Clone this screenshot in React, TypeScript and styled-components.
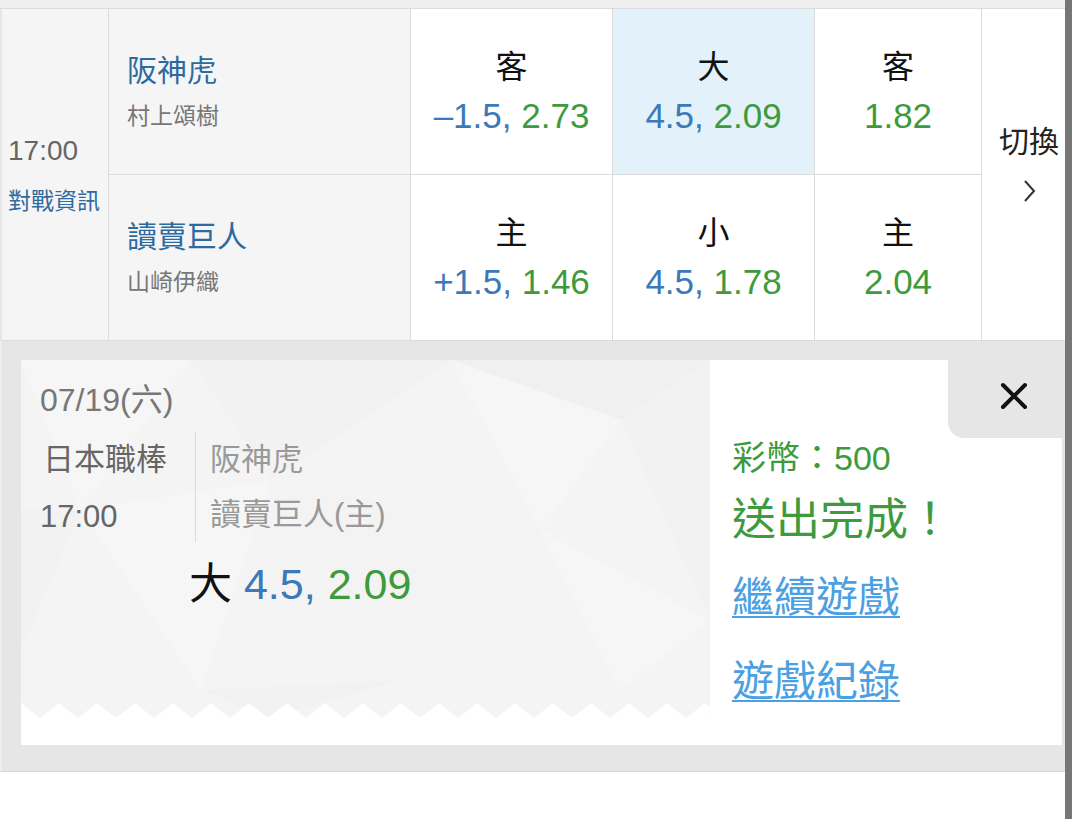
import React from 'react';
import styled, { createGlobalStyle } from 'styled-components';

const GlobalStyle = createGlobalStyle`
  html, body {
    margin: 0;
    padding: 0;
    background: #fff;
  }
  body {
    font-family: 'Liberation Sans', 'Noto Sans CJK TC', sans-serif;
    color: #222;
  }
  * {
    box-sizing: border-box;
  }
`;

type Odd = { label: string; line?: string; price: string; active?: boolean };
type Side = { team: string; pitcher: string; odds: Odd[] };

const sides: Side[] = [
  {
    team: '阪神虎',
    pitcher: '村上頌樹',
    odds: [
      { label: '客', line: '–1.5,', price: '2.73' },
      { label: '大', line: '4.5,', price: '2.09', active: true },
      { label: '客', price: '1.82' },
    ],
  },
  {
    team: '讀賣巨人',
    pitcher: '山崎伊織',
    odds: [
      { label: '主', line: '+1.5,', price: '1.46' },
      { label: '小', line: '4.5,', price: '1.78' },
      { label: '主', price: '2.04' },
    ],
  },
];

const Page = styled.div`
  width: 1072px;
  min-height: 819px;
  background: #fff;
`;

const TopStrip = styled.div`
  height: 9px;
  background: #efefef;
  border-bottom: 1px solid #dcdcdc;
`;

const Board = styled.div`
  display: grid;
  grid-template-columns: 109px 302px 202px 202px 167px 1fr;
  grid-template-rows: 166px 165px;
  border-bottom: 1px solid #dcdcdc;
`;

const TimeCell = styled.div`
  grid-row: span 2;
  display: flex;
  flex-direction: column;
  justify-content: center;
  padding-left: 6px;
  background: #f5f5f5;
  border-left: 2px solid #e6e6e6;
  border-right: 1px solid #dcdcdc;
`;

const KickOff = styled.div`
  font-size: 28px;
  line-height: 36px;
  color: #666;
`;

const InfoLink = styled.div`
  margin-top: 17px;
  font-size: 23px;
  line-height: 30px;
  color: #2f6b9f;
  white-space: nowrap;
`;

const TeamCell = styled.div<{ $top: boolean }>`
  display: flex;
  flex-direction: column;
  justify-content: center;
  padding-left: 18px;
  background: #f5f5f5;
  border-right: 1px solid #dcdcdc;
  border-bottom: ${(p) => (p.$top ? '1px solid #dcdcdc' : 'none')};
`;

const TeamName = styled.div`
  font-size: 30px;
  line-height: 44px;
  color: #2c6aa0;
`;

const Pitcher = styled.div`
  margin-top: 5px;
  font-size: 23px;
  line-height: 36px;
  color: #777;
`;

const OddCell = styled.div<{ $top: boolean; $active?: boolean }>`
  display: flex;
  flex-direction: column;
  align-items: center;
  justify-content: center;
  background: ${(p) => (p.$active ? '#e3f1fb' : '#fff')};
  border-right: 1px solid #dcdcdc;
  border-bottom: ${(p) => (p.$top ? '1px solid #dcdcdc' : 'none')};
`;

const OddLabel = styled.div`
  font-size: 32px;
  line-height: 44px;
  color: #111;
`;

const OddValue = styled.div`
  margin-top: 5px;
  font-size: 35px;
  line-height: 44px;
  white-space: nowrap;
`;

const Num = styled.span<{ $tone: 'blue' | 'green' }>`
  color: ${(p) => (p.$tone === 'blue' ? '#3b79b8' : '#3d9a3d')};
`;

const SwitchCell = styled.div`
  grid-row: span 2;
  display: flex;
  flex-direction: column;
  align-items: center;
  padding-top: 113px;
  padding-left: 4px;
  background: #fff;
`;

const SwitchText = styled.div`
  font-size: 30px;
  line-height: 40px;
  color: #222;
  white-space: nowrap;
`;

const Chevron = styled.svg`
  margin-top: 17px;
  display: block;
`;

const Panel = styled.div`
  padding: 19px 10px 26px 19px;
  background: #e6e6e6;
  border-left: 2px solid #eeeeee;
  border-bottom: 1px solid #d4d4d4;
`;

const Card = styled.div`
  display: flex;
  height: 385px;
  background: #fff;
`;

const Ticket = styled.div`
  position: relative;
  width: 689px;
  height: 358px;
  padding: 20px 0 0 19px;
  background: #f4f4f4;
  border-bottom-right-radius: 10px;
  overflow: hidden;
`;

const TicketArt = styled.svg`
  position: absolute;
  inset: 0;
  width: 100%;
  height: 100%;
`;

const TicketBody = styled.div`
  position: relative;
`;

const DateLine = styled.div`
  font-size: 32px;
  line-height: 40px;
  color: #777;
`;

const InfoRow = styled.div`
  display: flex;
  margin-top: 12px;
`;

const LeagueCol = styled.div`
  width: 155px;
  font-size: 31px;
  line-height: 55px;
  color: #666;
`;

const LeagueName = styled.div`
  padding-left: 3px;
`;

const LeagueTime = styled.div`
  margin-top: 5px;
  line-height: 50px;
`;

const TeamsCol = styled.div`
  padding-left: 14px;
  border-left: 1px solid #dadada;
  font-size: 31px;
  line-height: 55px;
  color: #999;
`;

const Pick = styled.div`
  margin-top: 17px;
  padding-left: 149px;
  font-size: 43px;
  line-height: 50px;
  color: #111;
  white-space: nowrap;
`;

const ResultPane = styled.div`
  flex: 1;
  display: flex;
  flex-direction: column;
  align-items: flex-start;
  padding-left: 22px;
`;

const CloseTab = styled.div`
  align-self: flex-end;
  width: 114px;
  height: 78px;
  padding: 22px 0 0 52px;
  background: #e6e6e6;
  border-bottom-left-radius: 16px;
`;

const Coins = styled.div`
  font-size: 34px;
  line-height: 40px;
  color: #3d9a3d;
  white-space: nowrap;
`;

const Done = styled.div`
  margin-top: 14px;
  font-size: 44px;
  line-height: 56px;
  color: #3d9a3d;
  white-space: nowrap;
`;

const ActionLink = styled.a<{ $gap: number }>`
  margin-top: ${(p) => p.$gap}px;
  font-size: 42px;
  line-height: 52px;
  color: #4aa0e2;
  text-decoration: underline;
  text-decoration-thickness: 2px;
  text-underline-offset: 4px;
  cursor: pointer;
  white-space: nowrap;
`;

const ScrollThumb = styled.div`
  position: fixed;
  top: 0;
  right: 8px;
  width: 7px;
  height: 100%;
  background: #767676;
`;

const TicketBackdrop = () => (
  <TicketArt viewBox="0 0 689 358" preserveAspectRatio="none">
    <polygon points="0,0 170,0 60,150" fill="#f6f6f6" />
    <polygon points="170,0 430,0 250,120" fill="#f2f2f2" />
    <polygon points="430,0 689,0 600,60" fill="#f0f0f0" />
    <polygon points="430,0 600,60 520,170" fill="#f6f6f6" />
    <polygon points="600,60 689,0 689,260" fill="#f2f2f2" />
    <polygon points="0,150 60,150 0,290" fill="#f2f2f2" />
    <polygon points="60,150 250,120 180,330" fill="#f6f6f6" />
    <polygon points="250,120 520,170 380,320" fill="#f3f3f3" />
    <polygon points="520,170 689,260 600,330" fill="#f6f6f6" />
    <polygon points="180,330 380,320 250,358" fill="#f2f2f2" />
    <defs>
      <pattern id="teeth" x="0" y="343" width="38" height="15" patternUnits="userSpaceOnUse">
        <polygon points="0,0 19,15 38,0 38,15 0,15" fill="#fff" />
      </pattern>
    </defs>
    <rect x="0" y="343" width="689" height="15" fill="url(#teeth)" />
  </TicketArt>
);

export default function App() {
  return (
    <Page>
      <GlobalStyle />
      <TopStrip />
      <Board>
        <TimeCell>
          <KickOff>17:00</KickOff>
          <InfoLink>對戰資訊</InfoLink>
        </TimeCell>
        {sides.map((side, i) => (
          <React.Fragment key={side.team}>
            <TeamCell $top={i === 0}>
              <TeamName>{side.team}</TeamName>
              <Pitcher>{side.pitcher}</Pitcher>
            </TeamCell>
            {side.odds.map((o, j) => (
              <OddCell key={j} $top={i === 0} $active={o.active}>
                <OddLabel>{o.label}</OddLabel>
                <OddValue>
                  {o.line && <Num $tone="blue">{o.line} </Num>}
                  <Num $tone="green">{o.price}</Num>
                </OddValue>
              </OddCell>
            ))}
            {i === 0 && (
              <SwitchCell>
                <SwitchText>切換</SwitchText>
                <Chevron width="14" height="24" viewBox="0 0 14 24">
                  <polyline points="3,2 12,12 3,22" fill="none" stroke="#333" strokeWidth="2" />
                </Chevron>
              </SwitchCell>
            )}
          </React.Fragment>
        ))}
      </Board>
      <Panel>
        <Card>
          <Ticket>
            <TicketBackdrop />
            <TicketBody>
              <DateLine>07/19(六)</DateLine>
              <InfoRow>
                <LeagueCol>
                  <LeagueName>日本職棒</LeagueName>
                  <LeagueTime>17:00</LeagueTime>
                </LeagueCol>
                <TeamsCol>
                  <div>阪神虎</div>
                  <div>讀賣巨人(主)</div>
                </TeamsCol>
              </InfoRow>
              <Pick>
                大 <Num $tone="blue">4.5,</Num> <Num $tone="green">2.09</Num>
              </Pick>
            </TicketBody>
          </Ticket>
          <ResultPane>
            <CloseTab>
              <svg width="28" height="28" viewBox="0 0 28 28">
                <path d="M3 3 L25 25 M25 3 L3 25" stroke="#111" strokeWidth="4" strokeLinecap="round" />
              </svg>
            </CloseTab>
            <Coins>彩幣：500</Coins>
            <Done>送出完成！</Done>
            <ActionLink $gap={24}>繼續遊戲</ActionLink>
            <ActionLink $gap={32}>遊戲紀錄</ActionLink>
          </ResultPane>
        </Card>
      </Panel>
      <ScrollThumb />
    </Page>
  );
}
